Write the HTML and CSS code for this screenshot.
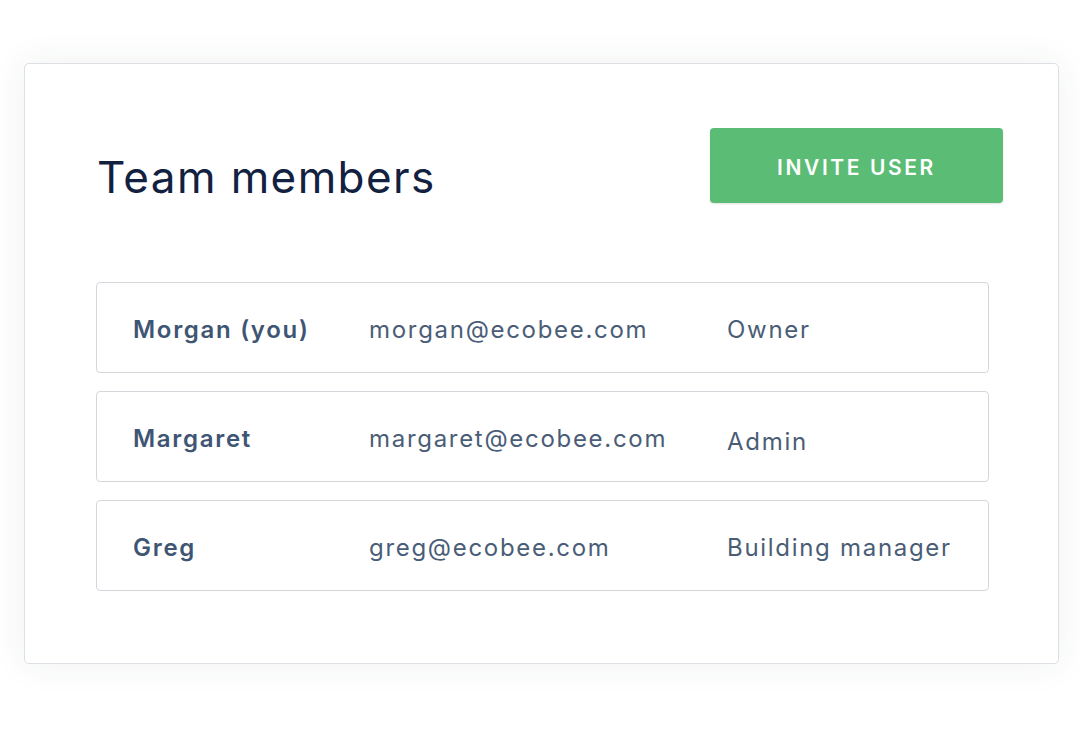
FILE: index.html
```html
<!DOCTYPE html>
<html>
<head>
<meta charset="utf-8">
<link rel="stylesheet" href="styles.css">
</head>
<body>
<div class="card">
  <div class="header">
    <h1 class="title">Team members</h1>
    <button class="invite">INVITE USER</button>
  </div>
  <div class="list">
    <div class="row">
      <span class="name">Morgan (you)</span>
      <span class="email">morgan@ecobee.com</span>
      <span class="role">Owner</span>
    </div>
    <div class="row">
      <span class="name">Margaret</span>
      <span class="email">margaret@ecobee.com</span>
      <span class="role role-low">Admin</span>
    </div>
    <div class="row">
      <span class="name">Greg</span>
      <span class="email">greg@ecobee.com</span>
      <span class="role">Building manager</span>
    </div>
  </div>
</div>
</body>
</html>
```

FILE: styles.css
```css
html, body {
  margin: 0;
  padding: 0;
  background: #ffffff;
}
body {
  font-family: "Inter", "Noto Sans", sans-serif;
  padding: 63px 21px 0 24px;
  height: 735px;
  box-sizing: border-box;
}
.card {
  width: 1035px;
  height: 601px;
  box-sizing: border-box;
  border: 1px solid #dcdfe4;
  border-radius: 5px;
  background: #fff;
  box-shadow: 0 0 36px rgba(40, 50, 80, 0.07);
  padding: 64px 55px 72px 72px;
}
.header {
  display: flex;
  justify-content: space-between;
  align-items: flex-start;
  height: 75px;
}
.title {
  margin: 0;
  padding-top: 22px;
  font-weight: 400;
  font-size: 44px;
  line-height: 54px;
  color: #12213f;
  letter-spacing: 1.4px;
}
.invite {
  width: 293px;
  height: 75px;
  border: none;
  border-radius: 4px;
  background: #5bbd75;
  box-shadow: 0 1px 2px rgba(0, 0, 0, 0.12);
  color: #fff;
  font-family: inherit;
  font-size: 21px;
  font-weight: 600;
  letter-spacing: 2.6px;
  padding: 3px 0 0 0;
}
.list {
  margin-top: 79px;
  width: 893px;
  margin-left: -1px;
  display: flex;
  flex-direction: column;
  gap: 18px;
}
.row {
  height: 91px;
  box-sizing: border-box;
  border: 1px solid #d3d7dc;
  border-radius: 4px;
  display: grid;
  grid-template-columns: 236px 358px 1fr;
  align-items: center;
  padding: 3px 0 0 36px;
  font-size: 24px;
  color: #4a5d77;
}
.name {
  font-weight: 600;
  color: #3e5573;
  letter-spacing: 1.7px;
}
.email, .role {
  font-weight: 400;
  letter-spacing: 1.7px;
}
.role-low {
  padding-top: 6px;
}
```
